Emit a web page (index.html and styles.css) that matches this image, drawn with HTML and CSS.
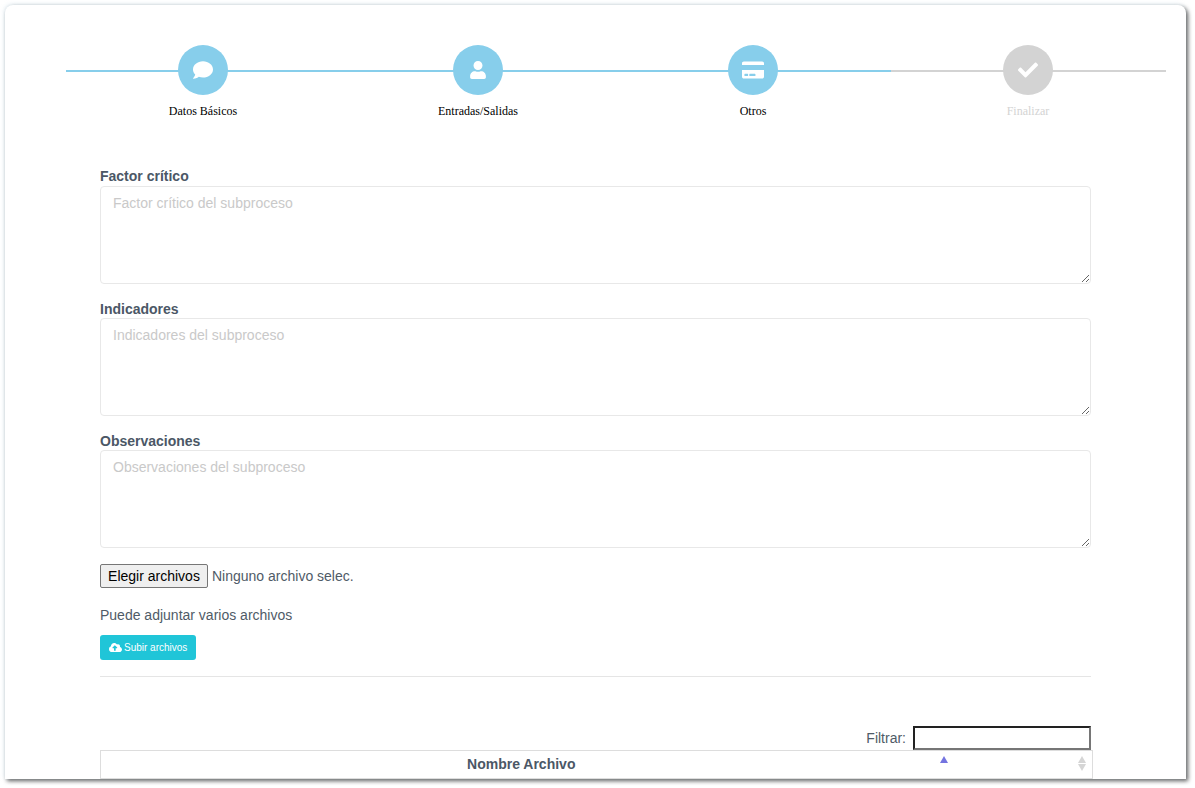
FILE: index.html
```html
<!DOCTYPE html>
<html lang="es">
<head>
<meta charset="utf-8">
<title>Subproceso</title>
<link rel="stylesheet" href="styles.css">
</head>
<body>
<main class="card">
  <ol class="stepper">
    <li class="step">
      <div class="step-head done"><span class="circle"><svg class="ico ico-comment" viewBox="0 0 512 512"><path d="M256 32C114.6 32 0 125.1 0 240c0 49.6 21.4 95 57 130.7C44.5 421.1 2.7 466 2.2 466.5c-2.2 2.3-2.8 5.7-1.5 8.7S4.8 480 8 480c66.3 0 116-31.8 140.6-51.4 32.7 12.3 69 19.4 107.4 19.4 141.4 0 256-93.1 256-208S397.4 32 256 32z"/></svg></span></div>
      <span class="step-label">Datos Básicos</span>
    </li>
    <li class="step">
      <div class="step-head done"><span class="circle"><svg class="ico ico-user" viewBox="0 0 448 512"><path d="M224 256c70.7 0 128-57.3 128-128S294.7 0 224 0 96 57.3 96 128s57.3 128 128 128zm89.6 32h-16.7c-22.2 10.2-46.9 16-72.9 16s-50.6-5.8-72.9-16h-16.7C60.2 288 0 348.2 0 422.4V464c0 26.5 21.5 48 48 48h352c26.5 0 48-21.5 48-48v-41.6c0-74.2-60.2-134.4-134.4-134.4z"/></svg></span></div>
      <span class="step-label">Entradas/Salidas</span>
    </li>
    <li class="step">
      <div class="step-head done"><span class="circle"><svg class="ico ico-card" viewBox="0 0 576 512"><path d="M0 432c0 26.5 21.5 48 48 48h480c26.5 0 48-21.5 48-48V256H0v176zm192-68c0-6.6 5.4-12 12-12h136c6.6 0 12 5.4 12 12v40c0 6.6-5.4 12-12 12H204c-6.6 0-12-5.4-12-12v-40zm-128 0c0-6.6 5.4-12 12-12h72c6.6 0 12 5.4 12 12v40c0 6.6-5.4 12-12 12H76c-6.6 0-12-5.4-12-12v-40zM576 80v48H0V80c0-26.5 21.5-48 48-48h480c26.5 0 48 21.5 48 48z"/></svg></span></div>
      <span class="step-label">Otros</span>
    </li>
    <li class="step pending">
      <div class="step-head"><span class="circle"><svg class="ico ico-check" viewBox="0 0 512 512"><path d="M173.898 439.404l-166.4-166.4c-9.997-9.997-9.997-26.206 0-36.204l36.203-36.204c9.997-9.998 26.207-9.998 36.204 0L192 312.69 432.095 72.596c9.997-9.997 26.207-9.997 36.204 0l36.203 36.204c9.997 9.997 9.997 26.206 0 36.204l-294.4 294.401c-9.998 9.997-26.207 9.997-36.204-.001z"/></svg></span></div>
      <span class="step-label">Finalizar</span>
    </li>
  </ol>

  <form class="form">
    <div class="field">
      <label class="field-label" for="factor">Factor crítico</label>
      <textarea class="field-input" id="factor" placeholder="Factor crítico del subproceso"></textarea>
    </div>
    <div class="field">
      <label class="field-label" for="indicadores">Indicadores</label>
      <textarea class="field-input" id="indicadores" placeholder="Indicadores del subproceso"></textarea>
    </div>
    <div class="field">
      <label class="field-label" for="observaciones">Observaciones</label>
      <textarea class="field-input" id="observaciones" placeholder="Observaciones del subproceso"></textarea>
    </div>

    <div class="file-row">
      <button class="file-btn" type="button">Elegir archivos</button>
      <span class="file-name">Ninguno archivo selec.</span>
    </div>
    <p class="hint">Puede adjuntar varios archivos</p>
    <button class="upload-btn" type="button"><svg class="ico-cloud" viewBox="0 0 640 512"><path d="M537.6 226.6c4.1-10.7 6.4-22.4 6.4-34.6 0-53-43-96-96-96-19.7 0-38.1 6-53.3 16.2C367 64.2 315.3 32 256 32c-88.4 0-160 71.6-160 160 0 2.7.1 5.4.2 8.1C40.2 219.8 0 273.2 0 336c0 79.5 64.5 144 144 144h368c70.7 0 128-57.3 128-128 0-61.9-44-113.6-102.4-125.4zM393.4 288H328v112c0 8.8-7.2 16-16 16h-48c-8.8 0-16-7.2-16-16V288h-65.4c-14.3 0-21.4-17.2-11.3-27.3l105.4-105.4c6.2-6.2 16.4-6.2 22.6 0l105.4 105.4c10.1 10.1 2.9 27.3-11.3 27.3z"/></svg>Subir archivos</button>
    <hr class="rule">

    <div class="filter">
      <label class="filter-label" for="filtro">Filtrar:</label>
      <input class="filter-input" id="filtro" type="text">
    </div>
    <table class="files">
      <thead>
        <tr>
          <th class="col-name sort-asc">Nombre Archivo</th>
          <th class="col-actions sort-both"></th>
        </tr>
      </thead>
    </table>
  </form>
</main>
</body>
</html>
```

FILE: styles.css
```css
* { box-sizing: border-box; }

html, body { margin: 0; height: 788px; overflow: hidden; background: #fff; }

body { padding: 5px 9px 9px 5px; font-family: "Liberation Sans", Arial, sans-serif; font-size: 14px; color: #4f5b67; }

.card {
  height: 774px;
  padding: 40px 0 0;
  background: #fff;
  border-radius: 8px 8px 0 0;
  overflow: hidden;
  box-shadow: -1px -1px 4px rgba(190, 215, 230, 0.35), 2px 2px 4px rgba(0, 0, 0, 0.65);
}

.stepper { display: flex; margin: 0 0 0 61px; padding: 0; width: 1100px; list-style: none; }

.step { flex: 0 0 275px; display: flex; flex-direction: column; align-items: center; }

.step-head {
  width: 100%;
  padding-right: 1px;
  display: flex;
  justify-content: center;
  background: linear-gradient(#d3d3d3, #d3d3d3) 0 25px / 100% 2px no-repeat;
}

.step-head.done { background-image: linear-gradient(#87ceeb, #87ceeb); }

.circle {
  width: 50px;
  height: 50px;
  border-radius: 50%;
  background: #87ceeb;
  display: flex;
  align-items: center;
  justify-content: center;
}

.pending .circle { background: #d3d3d3; }

.ico { fill: #fff; display: block; }
.ico-comment { width: 20px; height: 20px; }
.ico-user { width: 16px; height: 18px; }
.ico-card { width: 22px; height: 20px; }
.ico-check { width: 20px; height: 20px; }

.step-label {
  margin: 9px 1px 0 0;
  font-family: "Liberation Serif", "Times New Roman", serif;
  font-size: 12px;
  line-height: 15px;
  color: #000;
}

.pending .step-label { color: #d3d3d3; }

.form { margin: 48px 0 0 95px; width: 993px; }

.field { width: 991px; margin-bottom: 15px; }

.field-label { display: block; height: 19px; font-size: 14px; line-height: 19px; font-weight: 700; color: #4b5766; }

.field + .field .field-label { line-height: 21px; }

.field-input {
  display: block;
  width: 100%;
  height: 98px;
  padding: 7px 12px;
  border: 1px solid #e8e8e8;
  border-radius: 4px;
  background: #fff;
  font: 14px/18px "Liberation Sans", Arial, sans-serif;
  color: #4f5b67;
}

.field-input::placeholder { color: #c9c9c9; opacity: 1; }

.file-row { display: flex; align-items: center; gap: 4px; margin-top: 16px; height: 24px; }

.file-btn {
  width: 108px;
  height: 24px;
  padding: 0;
  border: 1px solid #767676;
  border-radius: 2px;
  background: #efefef;
  font: 14px "Liberation Sans", Arial, sans-serif;
  color: #000;
}

.hint { margin: 17px 0 0; line-height: 20px; }

.upload-btn {
  display: flex;
  align-items: center;
  width: 96px;
  height: 25px;
  margin-top: 10px;
  padding: 0 0 0 9px;
  border: 0;
  border-radius: 3px;
  background: #20c5d8;
  font: 10px "Liberation Sans", Arial, sans-serif;
  color: #fff;
}

.ico-cloud { width: 13px; height: 11px; margin-right: 2px; fill: #fff; }

.rule { width: 991px; height: 1px; margin: 16px 0 0; border: 0; background: #e5e5e5; }

.filter { display: flex; justify-content: flex-end; align-items: center; gap: 7px; width: 991px; height: 24px; margin-top: 49px; }

.filter-label { line-height: 24px; }

.filter-input {
  width: 178px;
  height: 24px;
  border: 2px solid;
  border-color: #222 #767676 #767676 #222;
  background: #fff;
  padding: 0;
}

.files { width: 993px; border-collapse: collapse; table-layout: fixed; }

.files th {
  position: relative;
  height: 28px;
  padding: 0 0 2px;
  border-top: 1px solid #ddd;
  border-bottom: 1px solid #ddd;
  font-size: 14px;
  font-weight: 700;
  color: #4b5766;
}

.col-name { width: 841px; border-left: 1px solid #ddd; }
.col-actions { border-right: 1px solid #ddd; }

.sort-asc::after,
.sort-both::after,
.sort-both::before {
  content: "";
  position: absolute;
  border-left: 4.5px solid transparent;
  border-right: 4.5px solid transparent;
}

.sort-asc::after { top: 5px; left: 839px; border-bottom: 7px solid #7474e0; }
.sort-both::before { top: 5px; right: 6px; border-bottom: 7px solid #d5d5d5; }
.sort-both::after { top: 13px; right: 6px; border-top: 7px solid #d5d5d5; }
```
